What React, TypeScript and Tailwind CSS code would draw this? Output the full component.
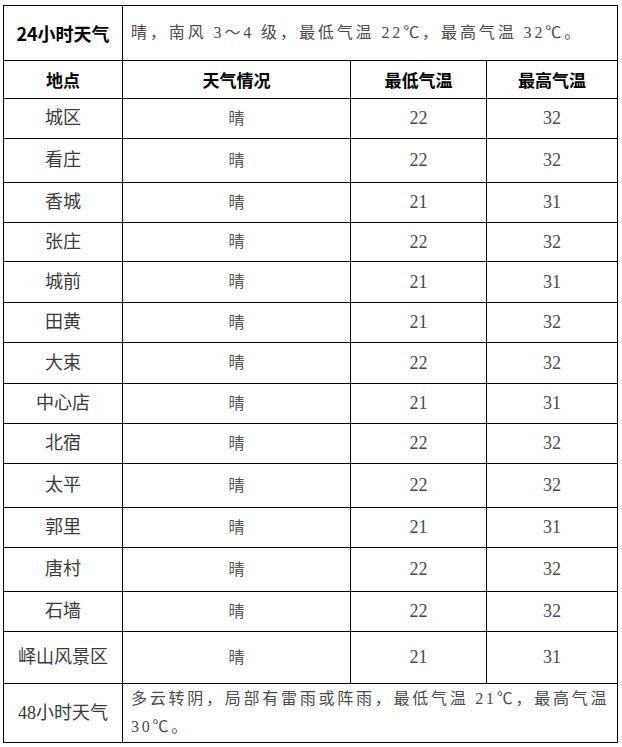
const rows = [
  { place: '城区', low: 22, high: 32, h: 'h-[40px]' },
  { place: '看庄', low: 22, high: 32, h: 'h-[44px]' },
  { place: '香城', low: 21, high: 31, h: 'h-[40px]' },
  { place: '张庄', low: 22, high: 32, h: 'h-[39px]' },
  { place: '城前', low: 21, high: 31, h: 'h-[41px]' },
  { place: '田黄', low: 21, high: 32, h: 'h-[40px]' },
  { place: '大束', low: 22, high: 32, h: 'h-[41px]' },
  { place: '中心店', low: 21, high: 31, h: 'h-[40px]' },
  { place: '北宿', low: 22, high: 32, h: 'h-[40px]' },
  { place: '太平', low: 22, high: 32, h: 'h-[44px]' },
  { place: '郭里', low: 21, high: 31, h: 'h-[40px]' },
  { place: '唐村', low: 22, high: 32, h: 'h-[44px]' },
  { place: '石墙', low: 22, high: 32, h: 'h-[40px]' },
  { place: '峄山风景区', low: 21, high: 31, h: 'h-[52px]' },
];

const cell = 'border border-black text-center align-middle p-0';

const App = () => {
  return (
    <div className="bg-white w-[622px] h-[747px] pt-[5px] pl-[3px] font-['Liberation_Serif','Noto_Sans_CJK_SC',serif] text-[#333]">
      <table className="border-collapse table-fixed w-[614px]">
        <colgroup>
          <col className="w-[119px]" />
          <col className="w-[228px]" />
          <col className="w-[136px]" />
          <col className="w-[131px]" />
        </colgroup>
        <tbody>
          {/* 24 hours */}
          <tr className="h-[55px]">
            <td className={`${cell} text-[18px] font-bold text-black font-['Noto_Sans_CJK_SC',sans-serif]`}>
              24小时天气
            </td>
            <td colSpan={3} className="border border-black align-middle text-left pl-[8px] text-[16px] tracking-[2.9px] text-[#4a4a4a]">
              晴，南风 3～4 级，最低气温 22℃，最高气温 32℃。
            </td>
          </tr>

          {/* Header */}
          <tr className="h-[38px] text-black font-bold text-[17px] font-['Noto_Sans_CJK_SC',sans-serif]">
            <td className={cell}>地点</td>
            <td className={cell}>天气情况</td>
            <td className={cell}>最低气温</td>
            <td className={cell}>最高气温</td>
          </tr>

          {rows.map((r) => (
            <tr key={r.place} className={r.h}>
              <td className={`${cell} text-[18px] text-[#3a3a3a]`}>{r.place}</td>
              <td className={`${cell} text-[16px] text-[#555]`}>晴</td>
              <td className={`${cell} text-[18px] text-[#4a4a4a]`}>{r.low}</td>
              <td className={`${cell} text-[18px] text-[#4a4a4a]`}>{r.high}</td>
            </tr>
          ))}

          {/* 48 hours */}
          <tr className="h-[59px]">
            <td className={`${cell} text-[18px] text-[#3a3a3a]`}>48小时天气</td>
            <td colSpan={3} className="border border-black align-middle text-left pl-[8px] text-[16px] leading-[28px] tracking-[2.75px] text-[#4a4a4a]">
              多云转阴，局部有雷雨或阵雨，最低气温 21℃，最高气温
              <br />
              30℃。
            </td>
          </tr>
        </tbody>
      </table>
    </div>
  );
};

export default App;
